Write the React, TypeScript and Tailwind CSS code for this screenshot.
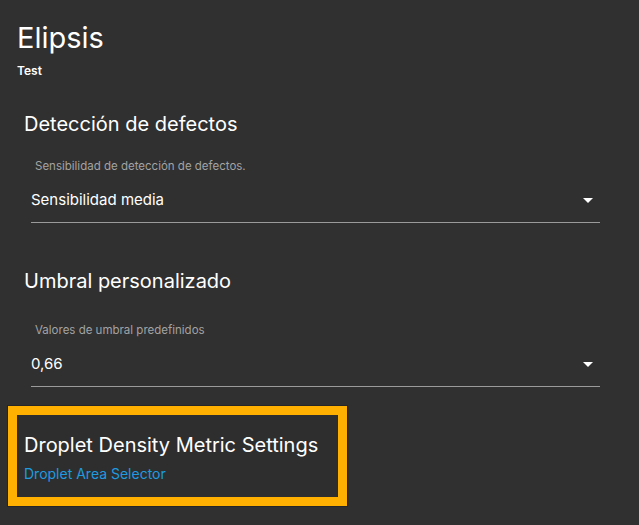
const font = { fontFamily: "Inter, 'Noto Sans', sans-serif" };

type SelectProps = {
  label: string;
  value: string;
};

const Arrow = () => (
  <svg width="10" height="5" viewBox="0 0 10 5" className="block">
    <path d="M0 0 L10 0 L5 5 Z" fill="#ffffff" />
  </svg>
);

const SelectField = ({ label, value }: SelectProps) => (
  <div className="ml-[31px] mr-[39px]">
    <div className="pl-[4px] text-[11.5px] leading-[14px] text-[#a3a3a3]">{label}</div>
    <div className="mt-[17px] flex h-[33px] items-start justify-between border-b border-[#9a9a9a]">
      <span className="text-[15px] leading-[20px] text-white">{value}</span>
      <span className="mr-[7px] mt-[8px]">
        <Arrow />
      </span>
    </div>
  </div>
);

export default function App() {
  return (
    <div className="min-h-[525px] w-full bg-[#303030] pt-[21px] text-white" style={font}>
      <div className="pl-[17px]">
        <h1 className="text-[29px] leading-[34px] font-normal">Elipsis</h1>
        <p className="mt-[8px] text-[12px] leading-[15px] font-semibold">Test</p>
      </div>

      <section className="mt-[33px]">
        <h2 className="pl-[24px] text-[20px] leading-[26px]">Detección de defectos</h2>
        <div className="mt-[22px]">
          <SelectField label="Sensibilidad de detección de defectos." value="Sensibilidad media" />
        </div>
      </section>

      <section className="mt-[45px]">
        <h2 className="pl-[24px] text-[20px] leading-[26px]">Umbral personalizado</h2>
        <div className="mt-[29px]">
          <SelectField label="Valores de umbral predefinidos" value="0,66" />
        </div>
      </section>

      <div className="ml-[8px] mt-[19px] h-[100px] w-[339px] border-[9px] border-[#ffb000] bg-[#2e2e2e] pl-[7px] pt-[17px] shadow-[0_0_0_1px_#262626]">
        <h3 className="text-[20px] leading-[26px]">Droplet Density Metric Settings</h3>
        <a className="mt-[7px] block text-[14px] leading-[18px] text-[#1e9be0]">Droplet Area Selector</a>
      </div>
    </div>
  );
}
